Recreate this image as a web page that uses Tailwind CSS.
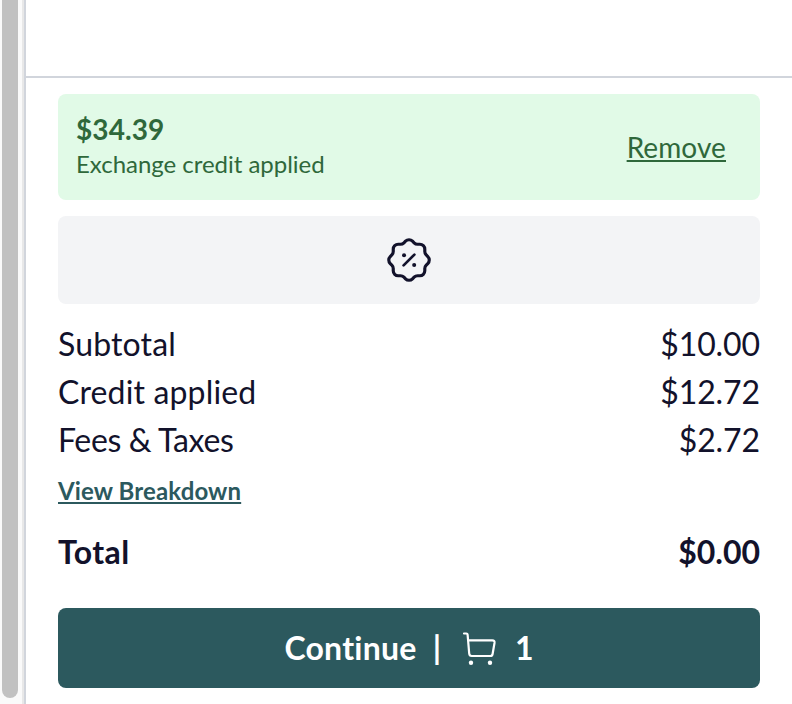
<!doctype html>
<html lang="en">
<head>
  <meta charset="utf-8"/>
  <meta name="viewport" content="width=device-width,initial-scale=1.0"/>
  <title>Cart Summary</title>
  <script src="https://cdn.jsdelivr.net/npm/@tailwindcss/browser@4"></script>
</head>
<body class="flex h-screen overflow-hidden bg-white font-['Lato',sans-serif] text-[#12122b] [font-variant-ligatures:none]">
  <!-- Scrollbar -->
  <div class="flex w-6 shrink-0 border-r-2 border-[#e8e8e8] bg-[#fafafa] pl-0.5">
    <div class="h-[698px] w-4 rounded-b-full bg-[#c1c1c1]"></div>
  </div>

  <!-- Cart panel -->
  <main class="flex flex-1 flex-col border-l-2 border-gray-300">
    <div class="h-[76px] shrink-0"></div>

    <div class="flex-1 border-t-2 border-gray-300 px-8 pt-4">
      <div class="flex h-[106px] items-center justify-between rounded-lg bg-[#e1fae7] pr-[34px] pl-[18px] text-[#2f683b]">
        <div>
          <p class="text-[28px] leading-9 font-bold tracking-[0.1px]">$34.39</p>
          <p class="pb-0.5 text-2xl leading-[34px] tracking-[-0.03px]">Exchange credit applied</p>
        </div>
        <button class="text-[28px] leading-10 tracking-[0.1px] underline decoration-2 underline-offset-2">Remove</button>
      </div>

      <!-- Discount code -->
      <button class="mt-4 flex h-[88px] w-full items-center justify-center rounded-lg bg-gray-100">
        <svg class="size-[54px]" viewBox="0 0 24 24" fill="none" stroke="currentColor" stroke-width="1.4" stroke-linecap="round" stroke-linejoin="round">
          <path d="M9.6 14.4l4.8-4.8" stroke-width="1.2"/>
          <circle cx="9.8" cy="9.9" r=".9" fill="currentColor" stroke="none"/>
          <circle cx="14.3" cy="14.2" r=".9" fill="currentColor" stroke="none"/>
          <path d="M5 7.2A2.2 2.2 0 0 1 7.2 5h1a2.2 2.2 0 0 0 1.55-.64l.7-.7a2.2 2.2 0 0 1 3.12 0l.7.7c.41.41.97.64 1.55.64h1a2.2 2.2 0 0 1 2.2 2.2v1c0 .58.23 1.14.64 1.55l.7.7a2.2 2.2 0 0 1 0 3.12l-.7.7a2.2 2.2 0 0 0-.64 1.55v1a2.2 2.2 0 0 1-2.2 2.2h-1a2.2 2.2 0 0 0-1.55.64l-.7.7a2.2 2.2 0 0 1-3.12 0l-.7-.7a2.2 2.2 0 0 0-1.55-.64h-1a2.2 2.2 0 0 1-2.2-2.2v-1a2.2 2.2 0 0 0-.64-1.55l-.7-.7a2.2 2.2 0 0 1 0-3.12l.7-.7A2.2 2.2 0 0 0 5 8.2z"/>
        </svg>
      </button>

      <!-- Totals -->
      <dl class="mt-4 text-[32px] leading-[48px]">
        <div class="flex justify-between"><dt class="tracking-[0.15px]">Subtotal</dt><dd class="tracking-[-0.1px]">$10.00</dd></div>
        <div class="flex justify-between"><dt class="tracking-[0.15px]">Credit applied</dt><dd class="tracking-[-0.1px]">$12.72</dd></div>
        <div class="flex justify-between"><dt class="tracking-[-0.35px]">Fees &amp; Taxes</dt><dd class="tracking-[-0.1px]">$2.72</dd></div>
      </dl>
      <a href="#" class="mt-[9px] block w-fit text-2xl leading-9 font-bold tracking-[0.12px] text-[#2c595e] underline decoration-2 underline-offset-2">View Breakdown</a>
      <div class="mt-[19px] flex justify-between text-[32px] leading-[48px] font-bold">
        <span class="tracking-[0.4px]">Total</span>
        <span>$0.00</span>
      </div>

      <button class="mt-8 flex h-20 w-full items-center justify-center rounded-lg bg-[#2c595e] text-[32px] leading-[48px] font-bold text-white">
        <span class="tracking-[0.25px]">Continue</span>
        <span class="ml-4">|</span>
        <svg class="ml-[19px] h-10 w-10" viewBox="0 0 40 40" fill="none" stroke="currentColor" stroke-width="2.2" stroke-linecap="round" stroke-linejoin="round">
          <path d="M4 5.5h2.3q1.2 0 1.3 1.2l1.6 18.8q.2 2.5 2.5 2.5h18.6q2 0 2.3-2l1.9-11q.4-2.7-2.2-2.7H8"/>
          <circle cx="11" cy="34.8" r="2.2" fill="currentColor" stroke="none"/>
          <circle cx="30" cy="34.8" r="2.2" fill="currentColor" stroke="none"/>
        </svg>
        <span class="ml-[15px]">1</span>
      </button>
    </div>
  </main>
</body>
</html>
